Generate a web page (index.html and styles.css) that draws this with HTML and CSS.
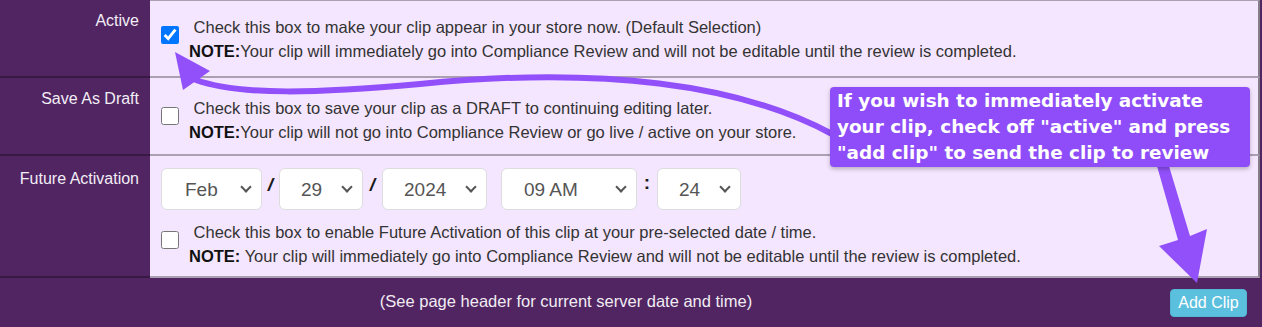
FILE: index.html
```html
<!DOCTYPE html>
<html lang="en">
<head>
  <meta charset="UTF-8" />
  <meta name="viewport" content="width=device-width, initial-scale=1.0" />
  <title>Clip Activation</title>
  <link rel="stylesheet" href="styles.css">
</head>
<body>
  <div class="panel">
    <div class="row row-active">
      <div class="label">Active</div>
      <div class="field">
        <label class="check">
          <input type="checkbox" checked />
          <span class="check-text">&nbsp;Check this box to make your clip appear in your store now. (Default Selection)<br><b>NOTE:</b>Your clip will immediately go into Compliance Review and will not be editable until the review is completed.</span>
        </label>
      </div>
    </div>

    <div class="row row-draft">
      <div class="label">Save As Draft</div>
      <div class="field">
        <label class="check">
          <input type="checkbox" />
          <span class="check-text">&nbsp;Check this box to save your clip as a DRAFT to continuing editing later.<br><b>NOTE:</b>Your clip will not go into Compliance Review or go live / active on your store.</span>
        </label>
      </div>
    </div>

    <div class="row row-future">
      <div class="label">Future Activation</div>
      <div class="field">
        <div class="date-pick">
          <span class="pick pick-month"><select><option>Feb</option></select></span>
          <span class="sep sep-a">/</span>
          <span class="pick pick-day"><select><option>29</option></select></span>
          <span class="sep sep-b">/</span>
          <span class="pick pick-year"><select><option>2024</option></select></span>
          <span class="pick pick-hour"><select><option>09 AM</option></select></span>
          <span class="sep sep-c">:</span>
          <span class="pick pick-min"><select><option>24</option></select></span>
        </div>
        <label class="check">
          <input type="checkbox" />
          <span class="check-text">&nbsp;Check this box to enable Future Activation of this clip at your pre-selected date / time.<br><b>NOTE:</b> Your clip will immediately go into Compliance Review and will not be editable until the review is completed.</span>
        </label>
      </div>
    </div>

    <div class="footer">
      <span class="footer-note">(See page header for current server date and time)</span>
      <button type="button" class="btn-add">Add Clip</button>
    </div>

    <!-- annotation arrows + callout -->
    <svg class="arrows" width="1262" height="327" viewBox="0 0 1262 327">
      <path d="M832 134 C 740 84, 600 66, 420 84 C 320 93, 240 96, 196 80" fill="none" stroke="#9150fa" stroke-width="6" stroke-linecap="round" />
      <polygon points="175,52 183,90 210,71" fill="#9150fa" />
      <polygon points="1157,166 1169,166 1190,236 1207,229 1197,283 1159,246 1178,240" fill="#9150fa" />
    </svg>
    <div class="callout">If you wish to immediately activate<br>your clip, check off "active" and press<br>"add clip" to send the clip to review</div>
  </div>
</body>
</html>
```

FILE: styles.css
```css
body {
  margin: 0;
  background: #512462;
  font-family: "Liberation Sans", Arial, sans-serif;
  font-size: 16.5px;
}
.panel {
  position: relative;
  width: 1262px;
  height: 327px;
  padding-right: 2px;
  box-sizing: border-box;
  background: #512462;
}
.row {
  display: grid;
  grid-template-columns: 150px 1fr;
}
.row-active { height: 78px; }
.row-draft { height: 78px; }
.row-future { height: 122px; }
.label {
  color: #f2eef5;
  text-align: right;
  font-size: 16px;
  padding: 12px 11px 0 0;
  border-bottom: 2px solid rgba(0,0,0,0.3);
  line-height: 17px;
}
.row-future .label {
  padding-top: 14px;
}
.field {
  background: #f4e6fe;
  border-bottom: 2px solid rgba(0,0,0,0.3);
  border-right: 2px solid rgba(0,0,0,0.45);
  padding: 14px 0 0 11px;
  color: #333;
}
.row-active .field {
  border-top: 1px solid rgba(0,0,0,0.3);
}
.row-draft .field {
  padding-top: 18px;
}
.row-future .field {
  padding-top: 12px;
}
.check {
  display: flex;
  gap: 10px;
  line-height: 24px;
}
.check input {
  width: 18px;
  height: 18px;
  margin: 11px 0 0 0;
  flex: none;
}
.check-text b {
  color: #111;
}
.date-pick {
  display: flex;
  align-items: flex-start;
  height: 42px;
  margin-bottom: 10px;
}
.pick {
  position: relative;
  display: block;
}
.pick::after {
  content: "";
  position: absolute;
  right: 12px;
  top: 15px;
  width: 6px;
  height: 6px;
  border-right: 2px solid #555;
  border-bottom: 2px solid #555;
  transform: rotate(45deg);
  pointer-events: none;
}
.pick select {
  appearance: none;
  -webkit-appearance: none;
  height: 42px;
  background: #fff;
  border: 1px solid #ddd;
  border-radius: 6px;
  font-family: "Liberation Sans", Arial, sans-serif;
  font-size: 19px;
  color: #555;
  padding: 0 0 0 21px;
}
.pick-month select { width: 101px; padding-left: 23px; }
.pick-day select { width: 84px; }
.pick-year select { width: 105px; }
.pick-hour select { width: 136px; padding-left: 22px; }
.pick-min select { width: 84px; }
.pick-year { margin-right: 14px; }
.sep {
  display: block;
  text-align: center;
  font-weight: bold;
  font-style: italic;
  font-size: 19px;
  line-height: 20px;
  padding-top: 7px;
  color: #1a1a1a;
}
.sep-a { width: 17px; }
.sep-b { width: 19px; }
.sep-c { width: 20px; font-style: normal; padding-top: 5px; }
.footer {
  display: flex;
  align-items: center;
  height: 49px;
}
.footer-note {
  width: 1132px;
  text-align: center;
  color: #f0ecf2;
  padding-bottom: 3px;
}
.btn-add {
  margin-left: 38px;
  width: 77px;
  height: 28px;
  padding: 0;
  background: #5bc0de;
  color: #fff;
  font-family: "Liberation Sans", Arial, sans-serif;
  font-size: 16px;
  border: 1px solid #52b6d4;
  border-radius: 4px;
  cursor: pointer;
}
.arrows {
  position: absolute;
  left: 0;
  top: 0;
  pointer-events: none;
}
.callout {
  position: absolute;
  left: 830px;
  top: 87px;
  width: 420px;
  height: 80px;
  box-sizing: border-box;
  padding: 1px 6px 0 7px;
  background: #8f4df9;
  border-radius: 4px;
  box-shadow: 0 2px 4px rgba(0,0,0,0.25);
  color: #fff;
  font-family: "DejaVu Sans", sans-serif;
  font-weight: bold;
  font-size: 18.4px;
  line-height: 26px;
  white-space: nowrap;
}
```
